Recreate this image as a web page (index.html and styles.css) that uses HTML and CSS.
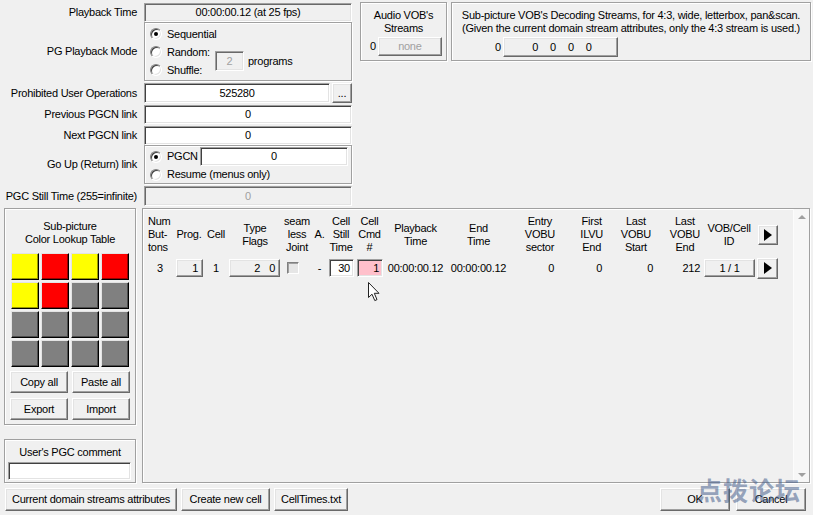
FILE: index.html
```html
<!DOCTYPE html>
<html lang="en">
<head>
<meta charset="utf-8">
<title>PGC Editor</title>
<link rel="stylesheet" href="styles.css">
</head>
<body>
<div class="top">
  <div class="props">
    <div class="prow first">
      <div class="lbl">Playback Time</div>
      <div class="fld dis blk w208 h19">00:00:00.12 (at 25 fps)</div>
    </div>
    <div class="prow tight">
      <div class="lbl">PG Playback Mode</div>
      <div class="grp mode">
        <div class="opt"><span class="radio on"></span>Sequential</div>
        <div class="opt"><span class="radio"></span>Random:</div>
        <div class="opt"><span class="radio"></span>Shuffle:</div>
        <div class="progs"><span class="fld dis n2">2</span><span>programs</span></div>
      </div>
    </div>
    <div class="prow">
      <div class="lbl">Prohibited User Operations</div>
      <div class="fld w186 h20">525280</div>
      <div class="btn dots">...</div>
    </div>
    <div class="prow">
      <div class="lbl">Previous PGCN link</div>
      <div class="fld w208 h19">0</div>
    </div>
    <div class="prow">
      <div class="lbl">Next PGCN link</div>
      <div class="fld w208 h19">0</div>
    </div>
    <div class="prow tight">
      <div class="lbl">Go Up (Return) link</div>
      <div class="grp goup">
        <div class="opt o1"><span class="radio on"></span>PGCN<span class="fld pgcn">0</span></div>
        <div class="opt o2"><span class="radio"></span>Resume (menus only)</div>
      </div>
    </div>
    <div class="prow">
      <div class="lbl">PGC Still Time (255=infinite)</div>
      <div class="fld dis w208 h20">0</div>
    </div>
  </div>

  <div class="grp audio">
    <div class="gtitle">Audio VOB's<br>Streams</div>
    <div class="srow"><span>0</span><span class="btn none">none</span></div>
  </div>

  <div class="grp subp">
    <div class="gtitle nowrap">Sub-picture VOB's Decoding Streams, for 4:3, wide, letterbox, pan&amp;scan.<br>(Given the current domain stream attributes, only the 4:3 stream is used.)</div>
    <div class="srow sp"><span>0</span><span class="btn quad"><span>0</span><span>0</span><span>0</span><span>0</span></span></div>
  </div>
</div>

<div class="mid">
  <div class="leftcol">
    <div class="grp clut">
      <div class="gtitle">Sub-picture<br>Color Lookup Table</div>
      <div class="cgrid">
        <span class="cell y"></span><span class="cell r"></span><span class="cell y"></span><span class="cell r"></span>
        <span class="cell y"></span><span class="cell r"></span><span class="cell g"></span><span class="cell g"></span>
        <span class="cell g"></span><span class="cell g"></span><span class="cell g"></span><span class="cell g"></span>
        <span class="cell g"></span><span class="cell g"></span><span class="cell g"></span><span class="cell g"></span>
      </div>
      <div class="cbtns">
        <span class="btn">Copy all</span><span class="btn">Paste all</span>
        <span class="btn">Export</span><span class="btn">Import</span>
      </div>
    </div>
    <div class="grp comment">
      <div class="clbl">User's PGC comment</div>
      <div class="fld cin"></div>
    </div>
  </div>

  <div class="grp panel">
    <div class="tbl">
      <div class="hd left">Num<br>But-<br>tons</div>
      <div class="hd">Prog.</div>
      <div class="hd">Cell</div>
      <div class="hd">Type<br>Flags</div>
      <div class="hd">seam<br>less<br>Joint</div>
      <div class="hd">A.</div>
      <div class="hd">Cell<br>Still<br>Time</div>
      <div class="hd">Cell<br>Cmd<br>#</div>
      <div class="hd">Playback<br>Time</div>
      <div class="hd">End<br>Time</div>
      <div class="hd rt p3">Entry<br>VOBU<br>sector</div>
      <div class="hd rt p3">First<br>ILVU<br>End</div>
      <div class="hd rt p5">Last<br>VOBU<br>Start</div>
      <div class="hd rt p2">Last<br>VOBU<br>End</div>
      <div class="hd">VOB/Cell<br>ID</div>
      <div class="hd"><span class="btn arr h"><svg width="8" height="12" viewBox="0 0 8 12"><polygon points="0,0 8,6 0,12" fill="#000"/></svg></span></div>

      <div class="dc">3</div>
      <div class="dc st"><span class="btn prog">1</span></div>
      <div class="dc">1</div>
      <div class="dc st"><span class="btn tf"><span>2</span><span>0</span></span></div>
      <div class="dc st"><span class="chk"></span></div>
      <div class="dc">-</div>
      <div class="dc st"><span class="fld cst">30</span></div>
      <div class="dc st"><span class="fld cst pink">1</span></div>
      <div class="dc">00:00:00.12</div>
      <div class="dc">00:00:00.12</div>
      <div class="dc rt p4">0</div>
      <div class="dc rt p4">0</div>
      <div class="dc rt p3">0</div>
      <div class="dc rt p2">212</div>
      <div class="dc st"><span class="btn vob">1 / 1</span></div>
      <div class="dc st"><span class="btn arr d"><svg width="8" height="12" viewBox="0 0 8 12"><polygon points="0,0 8,6 0,12" fill="#000"/></svg></span></div>
    </div>
    <div class="vscroll">
      <span class="tri up"></span>
      <span class="tri down"></span>
    </div>
  </div>
</div>

<div class="bottom">
  <span class="btn b1">Current domain streams attributes</span>
  <span class="btn b2">Create new cell</span>
  <span class="btn b3">CellTimes.txt</span>
  <span class="spacer"></span>
  <span class="btn b4">OK</span>
  <span class="btn b5">Cancel</span>
</div>

<svg class="cursor" width="13" height="20" viewBox="0 0 13 20"><path d="M0.5 0.5 L0.5 15.5 L4 12.2 L6.8 18.6 L9 17.6 L6.3 11.3 L11 11.3 Z" fill="#fff" stroke="#222" stroke-width="1" stroke-linejoin="miter"/></svg>
<div class="wm">点拨论坛</div>
</body>
</html>
```

FILE: styles.css
```css
* { box-sizing: border-box; }
html, body { margin: 0; padding: 0; }
body {
  background: #f0f0f0;
  font-family: "Liberation Sans", Arial, sans-serif;
  font-size: 11px;
  line-height: 13px;
  letter-spacing: -0.25px;
  color: #000;
  width: 813px;
  height: 515px;
  overflow: hidden;
  position: relative;
}

/* generic controls */
.fld {
  background: #fff;
  border: 1px solid;
  border-color: #a0a0a0 #fff #fff #a0a0a0;
  box-shadow: inset 1px 1px 0 #404040, inset -1px -1px 0 #e3e3e3;
  display: flex;
  align-items: center;
  justify-content: center;
}
.fld.dis { background: #f0f0f0; color: #a0a0a0; box-shadow: inset 1px 1px 0 #696969, inset -1px -1px 0 #e3e3e3; }
.fld.blk { color: #000; }
.btn {
  background: #f0f0f0;
  border: 1px solid;
  border-color: #fff #696969 #696969 #fff;
  box-shadow: inset -1px -1px 0 #a0a0a0, inset 1px 1px 0 #e3e3e3;
  display: flex;
  align-items: center;
  justify-content: center;
  color: #000;
  white-space: nowrap;
}
.grp {
  border: 1px solid #a0a0a0;
  box-shadow: inset 1px 1px 0 #fff, 1px 1px 0 #fff;
}
.radio {
  width: 12px;
  height: 12px;
  border-radius: 50%;
  background: #fff;
  border: 1px solid;
  border-color: #808080 #fff #fff #808080;
  box-shadow: inset 1px 1px 0 #404040, inset -1px -1px 0 #e3e3e3;
  flex: none;
  margin-right: 5px;
  position: relative;
}
.radio.on::after {
  content: "";
  position: absolute;
  left: 3px;
  top: 3px;
  width: 4px;
  height: 4px;
  border-radius: 50%;
  background: #000;
}
.w208 { width: 208px; }
.w186 { width: 186px; }
.h19 { height: 19px; }
.h20 { height: 20px; }

/* top section */
.top { display: flex; align-items: flex-start; }
.props { width: 352px; padding-top: 3px; flex: none; }
.prow { display: flex; align-items: center; margin-top: 2px; }
.prow.first, .prow.tight { margin-top: 0; }
.lbl { width: 144px; padding-right: 7px; text-align: right; white-space: nowrap; flex: none; }
.dots { width: 20px; height: 20px; margin-left: 2px; }

.mode {
  width: 208px;
  height: 59px;
  display: grid;
  grid-template-columns: 65px auto;
  grid-template-rows: 18px 18px 18px;
  padding: 2px 0 0 5px;
}
.opt { display: flex; align-items: center; grid-column: 1; white-space: nowrap; }
.progs { grid-column: 2; grid-row: 2 / 4; align-self: center; display: flex; align-items: center; gap: 4px; }
.n2 { width: 29px; height: 20px; }

.goup { width: 208px; height: 39px; padding: 1px 3px 0 5px; }
.goup .o1 { height: 19px; }
.goup .o2 { height: 17px; }
.pgcn { width: 148px; height: 19px; margin-left: auto; }

.audio { width: 87px; height: 59px; margin: 2px 0 0 8px; flex: none; padding-top: 6px; }
.gtitle { text-align: center; }
.nowrap { white-space: nowrap; }
.srow { display: flex; align-items: center; margin-top: 2px; padding-left: 9px; gap: 2px; }
.none { width: 64px; height: 19px; color: #a0a0a0; }
.subp { width: 360px; height: 59px; margin: 2px 0 0 4px; flex: none; padding-top: 6px; }
.srow.sp { padding-left: 43px; }
.quad { width: 115px; height: 20px; gap: 12px; padding-left: 3px; }

/* middle */
.mid { display: flex; margin-top: 2px; padding-left: 4px; }
.leftcol { width: 132px; flex: none; }
.clut { height: 217px; padding-top: 11px; }
.cgrid {
  display: grid;
  grid-template-columns: repeat(4, 28px);
  grid-template-rows: repeat(4, 27px);
  gap: 2px;
  justify-content: center;
  margin-top: 7px;
}
.cell {
  border: 1px solid;
  border-color: #e3e3e3 #000 #000 #e3e3e3;
  box-shadow: inset -1px -1px 0 rgba(0,0,0,.4);
}
.y { background: #ffff00; }
.r { background: #ff0000; }
.g { background: #808080; }
.cbtns {
  display: grid;
  grid-template-columns: 58px 58px;
  grid-template-rows: 22px 22px;
  column-gap: 4px;
  row-gap: 5px;
  justify-content: center;
  margin-top: 4px;
}
.comment { margin-top: 14px; height: 44px; padding: 6px 0 0 3px; }
.clbl { text-align: center; padding-right: 3px; }
.cin { width: 123px; height: 18px; margin-top: 3px; }

.panel { width: 668px; height: 275px; margin-left: 6px; display: flex; flex: none; }
.tbl {
  flex: 1;
  padding: 6px 0 0 3px;
  display: grid;
  grid-template-columns: 28px 30px 24px 54px 30px 15px 28px 29px 63px 63px 48px 48px 50px 46px 54px 22px;
  grid-template-rows: 39px 20px;
  row-gap: 4px;
  align-content: start;
}
.hd { display: flex; align-items: center; justify-content: center; text-align: center; white-space: nowrap; }
.hd.left { justify-content: flex-start; text-align: left; padding-left: 2px; }
.dc { display: flex; align-items: center; justify-content: center; white-space: nowrap; }
.dc.st { justify-content: flex-start; }
.hd.rt, .dc.rt { justify-content: flex-end; }
.p2 { padding-right: 2px; }
.p3 { padding-right: 3px; }
.p4 { padding-right: 4px; }
.p5 { padding-right: 5px; }
.arr.h { width: 20px; height: 20px; margin-left: 1px; }
.arr.d { width: 21px; height: 21px; margin-left: 1px; }
.prog { width: 27px; height: 18px; margin-left: 2px; justify-content: flex-end; padding-right: 4px; }
.tf { width: 51px; height: 18px; margin-left: 1px; justify-content: flex-end; padding-right: 4px; gap: 9px; }
.chk {
  width: 12px; height: 12px; margin-left: 5px;
  background: #e6e6e6;
  border: 1px solid; border-color: #808080 #fff #fff #808080;
  box-shadow: inset 1px 1px 0 #a0a0a0;
}
.cst { width: 25px; height: 18px; margin-left: 2px; justify-content: flex-end; padding-right: 3px; }
.cst.pink { width: 26px; background: #ffc0cb; }
.vob { width: 51px; height: 18px; margin-left: 2px; }

.vscroll {
  width: 16px;
  flex: none;
  background: #f7f7f7;
  border-left: 1px solid #fcfcfc;
  display: flex;
  flex-direction: column;
  justify-content: space-between;
  align-items: center;
  padding: 6px 0 5px;
}
.tri { width: 0; height: 0; border-left: 4px solid transparent; border-right: 4px solid transparent; }
.tri.up { border-bottom: 4px solid #a0a0a0; }
.tri.down { border-top: 4px solid #a0a0a0; }

/* bottom */
.bottom { display: flex; margin-top: 5px; padding: 0 7px 0 5px; }
.bottom .btn { height: 23px; }
.b1 { width: 172px; }
.b2 { width: 89px; margin-left: 4px; }
.b3 { width: 74px; margin-left: 4px; }
.spacer { flex: 1; }
.b4 { width: 70px; }
.b5 { width: 70px; margin-left: 6px; }

/* overlays */
.cursor { position: absolute; left: 368px; top: 282px; }
.wm {
  position: absolute;
  left: 697px;
  top: 474px;
  font-family: "Noto Sans CJK SC", sans-serif;
  font-weight: 700;
  font-size: 25px;
  line-height: 30px;
  letter-spacing: 1px;
  color: rgba(70, 95, 140, 0.55);
  pointer-events: none;
  white-space: nowrap;
}
```
